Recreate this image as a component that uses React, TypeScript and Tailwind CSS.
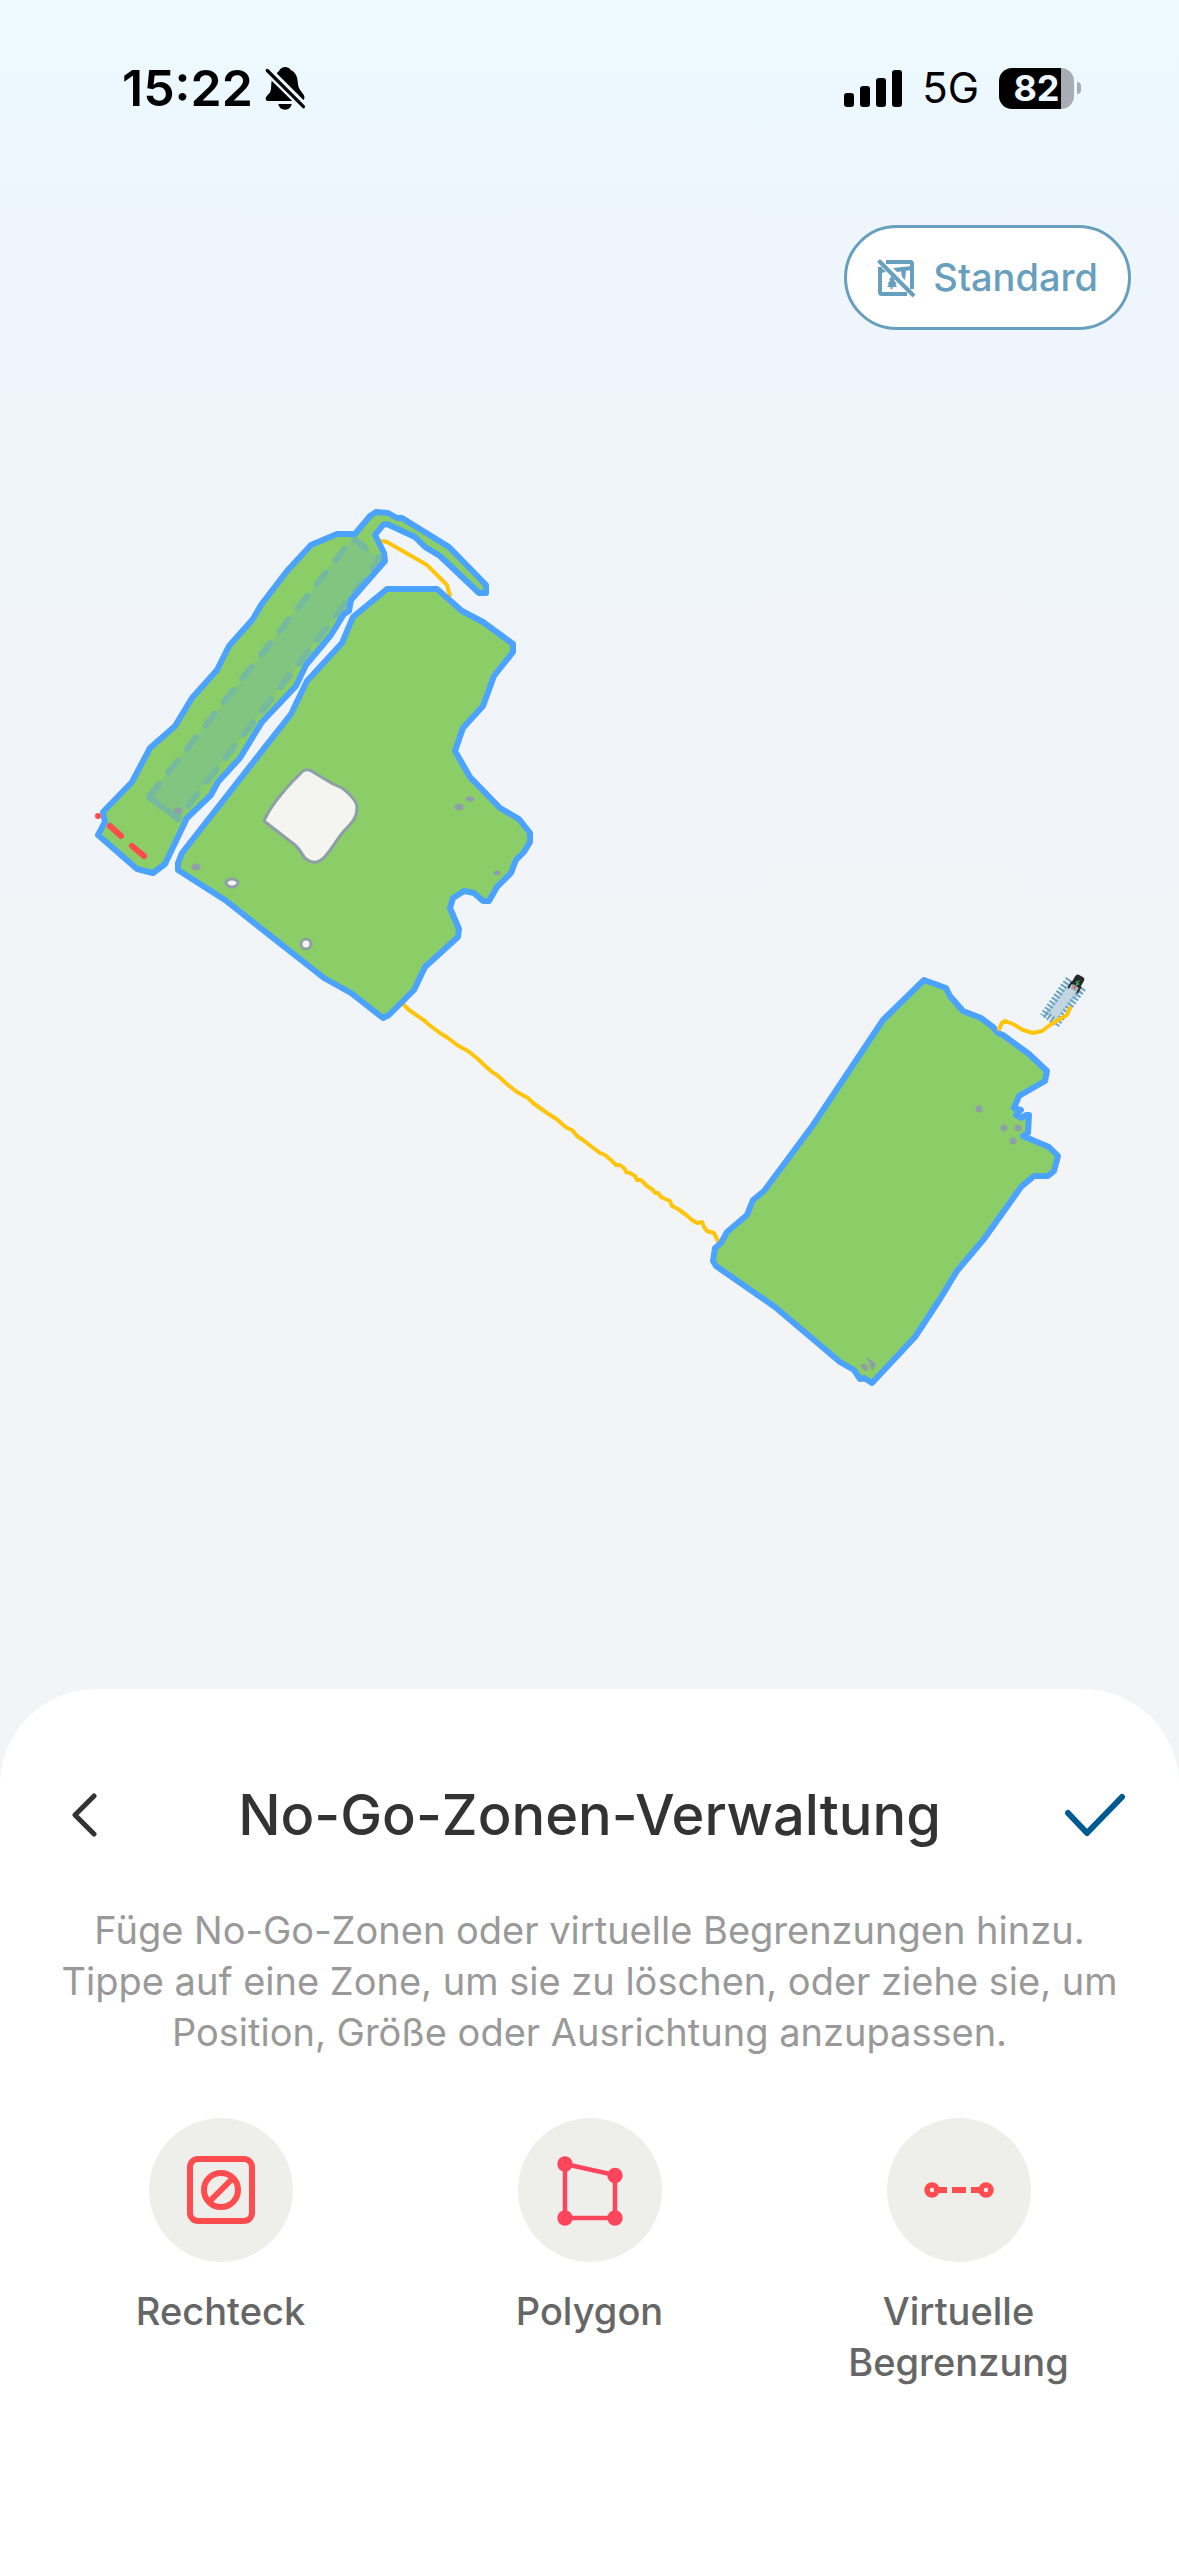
/**
 * No-go zone management: garden map on top, bottom sheet with the
 * zone tools underneath.
 *
 * All map geometry is in map units (the viewBox of GardenMap), so the
 * drawing scales with the width of the window.
 */

import React, { useState } from "react";

type Tool = "rect" | "polygon" | "line";

const AREAS: { id: string; points: string }[] = [
  {
    id: "strip",
    points:
      "337,534 311,545 287,571 261,605 253,619 229,646 217,670 192,698 175,726 150,748 132,782 103,812 105,822 98,835 137,869 153,873 165,864 187,818 211,795 218,782 240,758 262,722 296,686 306,665 331,635 344,614 349,611 351,600 385,561 384,553 375,535 383,525 387,524 415,537 425,547 440,556 479,593 486,593 486,585 449,547 402,518 397,518 388,513 376,512 370,516 355,534",
  },
  {
    id: "main",
    points:
      "387,589 437,589 462,611 483,622 513,644 513,652 494,676 483,706 463,728 455,751 470,777 500,808 519,819 530,833 530,842 524,852 516,860 511,873 497,887 489,901 483,901 474,893 464,891 453,898 450,908 459,929 458,937 425,967 414,990 389,1015 383,1018 351,993 324,978 225,900 178,870 178,863 182,853 291,714 307,681 342,643 353,617",
  },
  {
    id: "front",
    points:
      "924,980 883,1020 813,1125 764,1191 753,1200 747,1215 727,1232 721,1243 715,1248 713,1261 716,1266 775,1307 840,1362 854,1370 860,1379 864,1378 872,1383 915,1337 940,1299 957,1271 984,1239 1021,1187 1034,1176 1048,1176 1054,1171 1058,1156 1049,1147 1023,1136 1028,1133 1029,1115 1026,1115 1021,1118 1016,1115 1021,1110 1014,1108 1019,1096 1045,1081 1047,1071 1029,1054 1003,1035 998,1033 993,1027 981,1018 963,1011 950,996 946,988",
  },
];

const PATHS = [
  "382,541 387,542 427,565 433,571 447,585 448,589 450,595",
  "404,1005 409,1010 425,1021 428,1024 440,1033 448,1038 457,1045 468,1051 478,1059 483,1064 492,1072 497,1075 508,1085 517,1092 528,1098 533,1103 547,1113 558,1120 562,1124 567,1128 572,1130 577,1136 583,1140 592,1147 600,1153 605,1155 611,1160 616,1165 620,1165 625,1169 626,1172 630,1173 635,1176 637,1180 641,1180 647,1186 653,1190 655,1193 658,1193 661,1197 670,1201 672,1206 678,1209 685,1214 692,1220 697,1223 702,1222 704,1227 707,1231 714,1233 716,1237 718,1241",
];

// small obstacles: cx, cy, rx, ry, open (light centre)
const OBSTACLES: [number, number, number, number, boolean][] = [
  [196, 867, 3, 2, false],
  [232, 883, 6, 4, true],
  [306, 944, 5, 5, true],
  [459, 807, 3, 2, false],
  [470, 799, 3, 1, false],
  [497, 873, 2, 1, false],
  [178, 811, 3, 2, false],
  [979, 1109, 2, 2, false],
  [1004, 1128, 2, 2, false],
  [1018, 1128, 2, 2, false],
  [1013, 1141, 2, 2, false],
];

function StatusBar() {
  return (
    <header className="flex h-44 items-center justify-between pl-[122px] pr-[98px] text-black">
      <div className="flex items-center gap-3">
        <span className="text-[50px] leading-none font-semibold">15:22</span>
        <svg className="h-[43px] w-10" viewBox="0 0 40 43" aria-label="Stumm">
          <path d="M11.7 6.3C13 5 14 4 15 2.5C16 .9 18 0 20 0C22.500 0 24.500 .8 25.700 3C30 5 32 9 32.500 13C33 17 33 19 34.500 22C36 25 39 27 39.300 29.500C39.500 31 39.500 32 38.500 33Z" />
          <path d="M6.700 13.700L27.300 34H3C.5 34 0 31.500 1.500 29.500C3 27.500 5 26 5.700 23.500C6.400 21 6 17 6.700 13.700Z" />
          <path d="M13.300 37H26.700C26 40.500 23.500 42.700 20 42.700C16.500 42.700 14 40.500 13.300 37Z" />
          <path d="M2.300 3.500L38.500 39.700" stroke="black" strokeWidth="3.200" strokeLinecap="round" />
        </svg>
      </div>
      <div className="flex items-center">
        <svg className="mr-[18px] h-[37px] w-[60px]" viewBox="0 0 60 37" aria-label="Empfang">
          <rect x="0" y="23" width="10" height="14" rx="3" />
          <rect x="16" y="16" width="10" height="21" rx="3" />
          <rect x="32" y="8" width="10" height="29" rx="3" />
          <rect x="48" y="0" width="10" height="37" rx="3" />
        </svg>
        <span className="mr-5 text-[42px] leading-none">5G</span>
        <div className="flex h-[41px] w-[75px] items-center justify-center rounded-[13px] bg-linear-to-r from-black from-83% to-[#a7acb5] to-83%">
          <span className="text-[36px] leading-none font-bold text-[#eef7fe]">82</span>
        </div>
        <div className="ml-[3px] h-3 w-1 rounded-r-full bg-[#a7acb5]" />
      </div>
    </header>
  );
}

function MapOffIcon() {
  return (
    <svg className="size-10" viewBox="0 0 40 40" fill="none" stroke="currentColor" strokeWidth="4">
      <path d="M9 4H33Q35 4 35 6V31" />
      <path d="M3 9V34Q3 36 5 36H30" />
      <path d="M1.500 2.500L37 38" />
      <g fill="currentColor" stroke="none">
        <path d="M16 10L35 8V12L20 14Z" />
        <path d="M24 13H29L28 22L25 19Z" />
        <path d="M3 11H6L9 14L4 15Z" />
        <path d="M14.500 18L18 22L17 22.500L20 26L18.500 26.500L20 29H15.500V31H13.500V29H10L12 26.500L10.500 26L13 22.500L12 22Z" />
      </g>
    </svg>
  );
}

function GardenMap() {
  return (
    <svg
      className="block h-auto w-full"
      viewBox="0 330 1179 1359"
      fill="none"
      strokeLinejoin="round"
      strokeLinecap="round"
      role="img"
      aria-label="Gartenkarte"
    >
      {AREAS.map((a) => (
        <polygon key={a.id} points={a.points} fill="#8bcd67" />
      ))}

      {/* selected zone */}
      <polygon points="149,797 178,819 380,559 353,538" fill="#82c580" />
      <path
        d="M149 797L353 538L380 559L178 819Z"
        stroke="#74baa0"
        strokeWidth="6"
        strokeDasharray="15 15"
        strokeDashoffset="-1"
      />
      <path d="M159 784L149 797L163 808" stroke="#74baa0" strokeWidth="6" />

      {PATHS.map((p) => (
        <polyline key={p} points={p} stroke="#ffc40c" strokeWidth="4" />
      ))}

      {AREAS.map((a) => (
        <polygon key={a.id} points={a.points} stroke="#4ca3ff" strokeWidth="6" />
      ))}

      <path
        d="M303 771Q308 768 313 772L333 784L342 788C350 794 357 801 357 808C357 817 353 822 343 832C336 840 328 856 321 860Q314 865 306 859C303 857 301 850 295 845L264 821C270 807 280 795 292 782Z"
        fill="#f4f5f1"
        stroke="#8f9fa8"
        strokeWidth="3"
      />
      {OBSTACLES.map(([cx, cy, rx, ry, open]) => (
        <ellipse
          key={`${cx}-${cy}`}
          cx={cx}
          cy={cy}
          rx={rx}
          ry={ry}
          fill={open ? "#f4f5f1" : "#8f9fa8"}
          stroke="#8f9fa8"
          strokeWidth="3"
        />
      ))}
      <path d="M861 1365Q866 1363 868 1367L866 1371Q863 1370 861 1365Z" fill="#8f9fa8" stroke="#8f9fa8" />
      <path d="M867 1358Q876 1362 875 1366L872 1370Q870 1362 867 1358Z" fill="#8f9fa8" stroke="#8f9fa8" />

      {/* virtual boundary */}
      <path d="M98 816H98.100M110 826L121 836M132 846L144 856" stroke="#ff4b4b" strokeWidth="6" />

      {/* charging lane with the mower parked at its end */}
      <polygon points="1068,983 1082,991 1055,1021 1045,1013" fill="#c2d5e1" />
      <g stroke="#6aa3c2" strokeWidth="7" strokeLinecap="butt" strokeDasharray="2 2">
        <path d="M1069 979L1043 1016" />
        <path d="M1083 988L1056 1025" />
        <path d="M1045 1014L1057 1023" />
      </g>
      <polyline
        points="999,1029 1002,1023 1005,1021 1013,1024 1023,1030 1033,1033 1042,1031 1050,1025 1058,1020 1067,1015 1070,1008"
        stroke="#ffc40c"
        strokeWidth="4"
      />
      <g transform="translate(1077 983) rotate(30)">
        <rect x="-5" y="-8" width="10" height="12" rx="3" fill="#26282b" />
        <path d="M-5 2V8M5 2V8" stroke="#26282b" strokeWidth="2" />
        <rect x="-3" y="3" width="6" height="5" fill="#a3a6aa" />
        <path d="M1 -3L-1 0H2L0 2" stroke="#2fd05e" strokeWidth="1" />
        <circle cx="0" cy="5" r="1" fill="#e5383b" />
      </g>
    </svg>
  );
}

function RectIcon() {
  return (
    <svg className="size-full" viewBox="0 0 144 144" fill="none" stroke="#ff4d4f" strokeWidth="6">
      <rect x="41" y="41" width="62" height="62" rx="8" />
      <circle cx="72" cy="72" r="17" />
      <path d="M60 84L84 60" />
    </svg>
  );
}

function PolygonIcon() {
  return (
    <svg className="size-full" viewBox="0 0 144 144" fill="#ff455b">
      <path d="M47 46L97 57V100H47Z" fill="none" stroke="#ff455b" strokeWidth="4.500" />
      <circle cx="47" cy="46" r="7.700" />
      <circle cx="97" cy="57.500" r="7.700" />
      <circle cx="97" cy="100" r="7.700" />
      <circle cx="47" cy="100" r="7.700" />
    </svg>
  );
}

function LineIcon() {
  return (
    <svg className="size-full" viewBox="0 0 144 144" fill="none" stroke="#ff4d4f">
      <circle cx="45" cy="72" r="5" strokeWidth="5.500" />
      <circle cx="99" cy="72" r="5" strokeWidth="5.500" />
      <path d="M50 72H60M65 72H79M84 72H94" strokeWidth="6" />
    </svg>
  );
}

const TOOLS: { id: Tool; label: string; icon: () => React.ReactElement }[] = [
  { id: "rect", label: "Rechteck", icon: RectIcon },
  { id: "polygon", label: "Polygon", icon: PolygonIcon },
  { id: "line", label: "Virtuelle Begrenzung", icon: LineIcon },
];

export default function App() {
  const [tool, setTool] = useState<Tool | null>(null);

  return (
    <div className="flex min-h-screen flex-col bg-[#f2f4f6] bg-linear-to-b from-[#ecf9ff] via-[#eff5fc] via-12% to-[#f2f4f6] to-45% font-[Inter,sans-serif]">
      <StatusBar />

      <div className="flex justify-end pt-[49px] pr-12">
        <button className="flex h-[105px] items-center gap-4 rounded-full border-3 border-[#689fbe] bg-white px-[30px] text-[38px] font-medium text-[#689fbe]">
          <MapOffIcon />
          Standard
        </button>
      </div>

      <main>
        <GardenMap />
      </main>

      <section className="flex-1 rounded-t-[96px] bg-white pt-[94px] pb-12">
        <div className="flex items-center justify-between px-[54px]">
          <button aria-label="Zurück" className="flex h-16 w-[60px] items-center justify-center">
            <svg className="h-11 w-7" viewBox="0 0 28 44" fill="none" stroke="#333" strokeWidth="5" strokeLinecap="round" strokeLinejoin="round">
              <path d="M24 3L5 22L24 41" />
            </svg>
          </button>
          <h1 className="text-[56px] leading-16 font-medium text-[#333]">No-Go-Zonen-Verwaltung</h1>
          <button aria-label="Fertig" className="flex h-16 w-[60px] items-center justify-center">
            <svg className="h-11 w-[60px]" viewBox="0 0 60 44" fill="none" stroke="#005a92" strokeWidth="6" strokeLinecap="round" strokeLinejoin="round">
              <path d="M3 20L22 40L57 4" />
            </svg>
          </button>
        </div>

        <p className="mt-[58px] px-14 text-center text-[38px] leading-[51px] text-[#999]">
          Füge No-Go-Zonen oder virtuelle Begrenzungen hinzu. Tippe auf eine Zone, um sie zu löschen, oder ziehe sie, um
          Position, Größe oder Ausrichtung anzupassen.
        </p>

        <div className="mt-[60px] grid grid-cols-3 px-9">
          {TOOLS.map(({ id, label, icon: Icon }) => (
            <button
              key={id}
              onClick={() => setTool(id)}
              aria-pressed={tool === id}
              className="flex flex-col items-center gap-6 px-12"
            >
              <span className="size-36 rounded-full bg-[#eeefeb]">
                <Icon />
              </span>
              <span className="text-[38px] leading-[51px] font-medium text-[#666]">{label}</span>
            </button>
          ))}
        </div>
      </section>
    </div>
  );
}
